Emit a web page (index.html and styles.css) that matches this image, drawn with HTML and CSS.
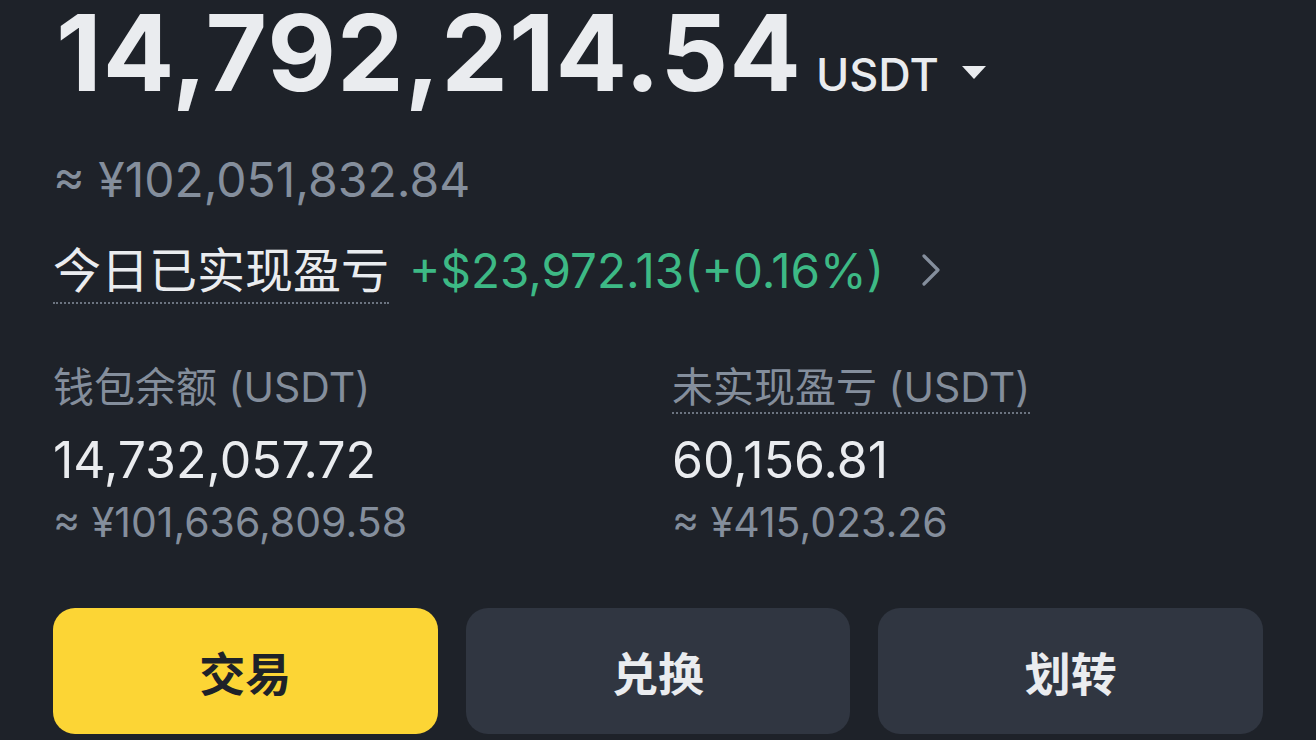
FILE: index.html
```html
<!DOCTYPE html>
<html lang="zh-CN">
<head>
    <meta charset="UTF-8">
    <meta name="viewport" content="width=device-width, initial-scale=1.0">
    <title>资产总览</title>
    <link rel="stylesheet" href="styles.css">
</head>
<body>
    <main class="wallet">
        <!-- Total balance -->
        <section class="total">
            <div class="total-row">
                <span class="total-amount">14,792,214.54</span>
                <span class="total-unit">USDT</span>
                <svg class="caret" width="26" height="15" viewBox="0 0 26 15">
                    <path d="M1 1 L25 1 L13 14 Z" fill="#eaecef"/>
                </svg>
            </div>
            <div class="total-fiat">≈ ¥102,051,832.84</div>
            <div class="pnl-row">
                <span class="pnl-label">今日已实现盈亏</span>
                <span class="pnl-value">+$23,972.13(+0.16%)</span>
                <svg class="chevron" width="22" height="34" viewBox="0 0 22 34">
                    <path d="M4 3 L18 17 L4 31" fill="none" stroke="#848e9c" stroke-width="3.2" stroke-linecap="round" stroke-linejoin="round"/>
                </svg>
            </div>
        </section>

        <!-- Balance details -->
        <section class="details">
            <div class="detail">
                <div class="detail-label"><span>钱包余额 (USDT)</span></div>
                <div class="detail-value">14,732,057.72</div>
                <div class="detail-fiat">≈ ¥101,636,809.58</div>
            </div>
            <div class="detail">
                <div class="detail-label"><span class="dotted">未实现盈亏 (USDT)</span></div>
                <div class="detail-value">60,156.81</div>
                <div class="detail-fiat">≈ ¥415,023.26</div>
            </div>
        </section>

        <!-- Actions -->
        <section class="actions">
            <button class="btn btn-primary">交易</button>
            <button class="btn">兑换</button>
            <button class="btn">划转</button>
        </section>
    </main>
</body>
</html>
```

FILE: styles.css
```css
body {
    margin: 0;
    background-color: #1e2229;
    color: #eaecef;
    font-family: "Inter", "Noto Sans CJK SC", sans-serif;
    overflow: hidden;
}
.wallet {
    padding: 0 53px;
}
.total-row {
    display: flex;
    align-items: baseline;
}
.total-amount {
    font-size: 106px;
    font-weight: 700;
    line-height: 1;
    letter-spacing: 1px;
    margin-left: 3px;
}
.total-unit {
    font-size: 45px;
    font-weight: 500;
    margin-left: 14px;
}
.caret {
    margin-left: 22px;
    align-self: center;
    margin-top: 38px;
}
.total-fiat {
    margin-top: 50px;
    font-size: 48px;
    line-height: 1;
    color: #848e9c;
}
.pnl-row {
    margin-top: 38px;
    display: flex;
    align-items: center;
}
.pnl-label {
    font-size: 48px;
    line-height: 1.1;
    padding-bottom: 4px;
    border-bottom: 2px dotted #6c7480;
}
.pnl-value {
    margin-left: 20px;
    font-size: 47.5px;
    color: #3db985;
    margin-bottom: 8px;
}
.chevron {
    margin-left: 36px;
    margin-bottom: 10px;
}
.details {
    margin-top: 58px;
    display: grid;
    grid-template-columns: 619px 1fr;
}
.detail-label {
    font-size: 41px;
    line-height: 1.1;
    color: #848e9c;
}
.detail-label span {
    display: inline-block;
    padding-bottom: 2px;
    border-bottom: 2px dotted transparent;
}
.detail-label .dotted {
    border-bottom-color: #6c7480;
}
.detail-value {
    margin-top: 16px;
    font-size: 50px;
    line-height: 1.2;
}
.detail-fiat {
    margin-top: 8px;
    font-size: 41px;
    line-height: 1.2;
    color: #848e9c;
}
.actions {
    margin-top: 61px;
    display: grid;
    grid-template-columns: repeat(3, 1fr);
    gap: 28px;
    width: 1210px;
}
.btn {
    height: 126px;
    border: none;
    border-radius: 22px;
    background-color: #303641;
    color: #eaecef;
    font-family: "Noto Sans CJK SC", sans-serif;
    font-size: 46px;
    font-weight: 700;
    cursor: pointer;
}
.btn-primary {
    background-color: #fcd535;
    color: #1e2229;
}
```
